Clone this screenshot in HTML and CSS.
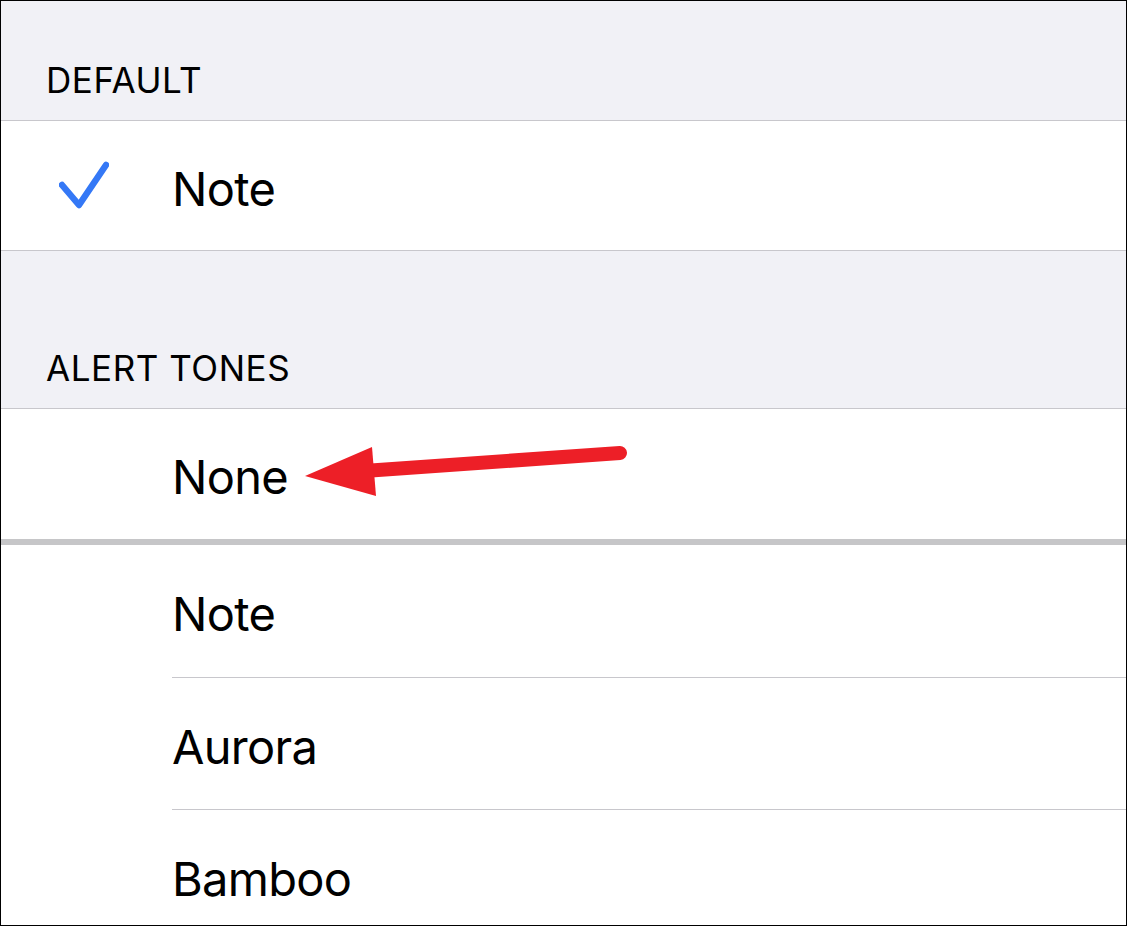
FILE: index.html
```html
<!DOCTYPE html>
<html>
<head>
<meta charset="utf-8">
<link rel="stylesheet" href="styles.css">
</head>
<body>
<div class="screen">
  <div class="group-header header-default"><span class="header-text">DEFAULT</span></div>
  <div class="row row-default">
    <div class="lead">
      <svg class="check" viewBox="0 0 50 48" width="50" height="48">
        <polyline points="3,24 20,44 47,4" fill="none" stroke="#3478f6" stroke-width="6.5" stroke-linecap="round" stroke-linejoin="round"/>
      </svg>
    </div>
    <span class="label">Note</span>
  </div>
  <div class="group-header header-alert"><span class="header-text">ALERT TONES</span></div>
  <div class="row row-none"><div class="lead"></div><span class="label">None</span></div>
  <div class="thick-divider"></div>
  <div class="tone-list">
    <div class="row tone tone-note"><div class="lead"></div><div class="tone-body"><span class="label">Note</span></div></div>
    <div class="row tone tone-aurora"><div class="lead"></div><div class="tone-body"><span class="label">Aurora</span></div></div>
    <div class="row tone tone-bamboo"><div class="lead"></div><div class="tone-body last"><span class="label">Bamboo</span></div></div>
  </div>
  <svg class="arrow" viewBox="0 0 1127 926" width="1127" height="926">
    <line x1="371" y1="470.5" x2="620" y2="453" stroke="#ed1f27" stroke-width="14" stroke-linecap="round"/>
    <polygon points="305,476 372,447 376,496" fill="#ed1f27"/>
  </svg>
</div>
</body>
</html>
```
FILE: styles.css
```css
html, body {
  margin: 0;
  padding: 0;
  background: #ffffff;
}
.screen {
  position: relative;
  box-sizing: border-box;
  width: 1127px;
  height: 926px;
  border: 1px solid #000000;
  overflow: hidden;
  background: #ffffff;
  font-family: "Inter", "Liberation Sans", sans-serif;
  color: #000000;
}
.group-header {
  box-sizing: border-box;
  background: #f1f1f6;
  border-bottom: 1px solid #c8c7cc;
  padding-left: 45px;
  display: flex;
  align-items: flex-end;
}
.header-default {
  height: 120px;
  padding-bottom: 22px;
}
.header-alert {
  height: 158px;
  padding-bottom: 22px;
}
.header-text {
  font-size: 35px;
  line-height: 36px;
  letter-spacing: 0.55px;
}
.row {
  box-sizing: border-box;
  display: flex;
  align-items: stretch;
  background: #ffffff;
}
.lead {
  width: 171px;
  flex: 0 0 171px;
  display: flex;
  align-items: center;
}
.label {
  font-size: 47px;
  line-height: 56px;
  letter-spacing: -0.7px;
}
.row-default {
  height: 130px;
  border-bottom: 1px solid #c8c7cc;
  align-items: center;
  padding-top: 6px;
}
.check {
  margin-left: 58px;
  margin-top: -7px;
}
.row-none {
  height: 130px;
  align-items: center;
  padding-top: 6px;
}
.thick-divider {
  height: 6px;
  background: #c6c6c8;
}
.tone {
  height: 132px;
}
.tone-note {
  height: 133px;
}
.tone-body {
  flex: 1;
  display: flex;
  align-items: center;
  padding-top: 6px;
  border-bottom: 1px solid #c8c7cc;
}
.arrow {
  position: absolute;
  left: -1px;
  top: -1px;
  pointer-events: none;
}
```
